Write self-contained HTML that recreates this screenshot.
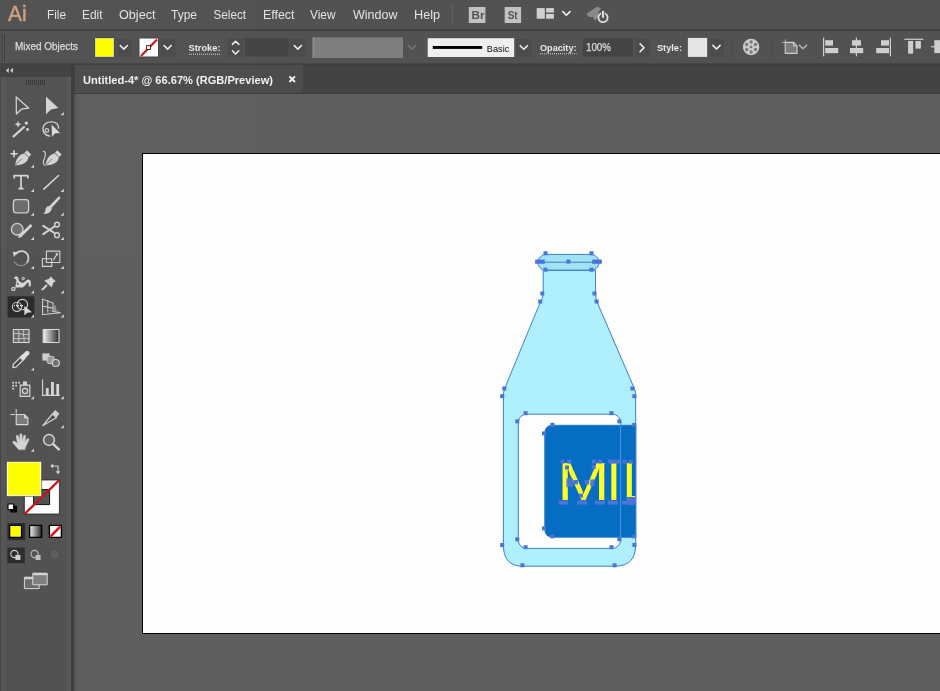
<!DOCTYPE html>
<html><head><meta charset="utf-8">
<style>
*{margin:0;padding:0;box-sizing:border-box}
html,body{width:940px;height:691px;overflow:hidden;background:#606060;font-family:"Liberation Sans",sans-serif;}
svg{position:absolute;left:0;top:0;will-change:transform;opacity:0.999}
text{font-family:"Liberation Sans",sans-serif}
.m{font-size:12.5px;fill:#e4e4e4}
.c{font-size:10px;fill:#dcdcdc;stroke:#dcdcdc;stroke-width:0.25px}
.cb{font-size:9.2px;fill:#ececec;font-weight:bold}
</style></head><body>
<svg width="940" height="691" viewBox="0 0 940 691">
<defs>
<path id="chev" d="M-3.6,-1.8 L0,1.8 L3.6,-1.8" fill="none" stroke="#f0f0f0" stroke-width="1.6" stroke-linecap="round" stroke-linejoin="round"/>
<path id="fly" d="M3,0 L3,3.2 L-0.2,3.2 Z" fill="#d4d4d4"/>
<linearGradient id="gr" x1="0" x2="1" y1="0" y2="0"><stop offset="0" stop-color="#f4f4f4"/><stop offset="1" stop-color="#2a2a2a"/></linearGradient>
</defs>
<!-- backgrounds -->
<rect x="0" y="0" width="940" height="691" fill="#606060"/>
<rect x="0" y="0" width="940" height="30" fill="#535353"/>
<rect x="0" y="29.4" width="940" height="1.6" fill="#3d3d3d"/>
<rect x="0" y="31" width="940" height="32.5" fill="#535353"/>
<rect x="0" y="63.5" width="940" height="30.5" fill="#444444"/>
<rect x="0" y="63.5" width="940" height="1.2" fill="#3e3e3e"/>
<rect x="0" y="93" width="940" height="1" fill="#3c3c3c"/>
<rect x="75" y="65" width="226.5" height="28" fill="#4d4d4d"/>
<rect x="301.5" y="65" width="1" height="28" fill="#525252"/>
<rect x="71" y="64" width="3.5" height="627" fill="#3e3e3e"/>
<rect x="74.5" y="94" width="4" height="597" fill="#5b5b5b"/>
<rect x="0" y="64" width="71" height="13" fill="#434343"/>
<rect x="0" y="77" width="71" height="614" fill="#535353"/>
<rect x="0" y="64" width="1" height="627" fill="#474747"/>
<rect x="1" y="77" width="5" height="614" fill="#575757"/>
<rect x="66.5" y="77" width="4.5" height="614" fill="#595959"/>
<!-- artboard -->
<rect x="142.5" y="153.5" width="800" height="480" fill="#ffffff" stroke="#000" stroke-width="1"/>
<g id="menu">
<text x="8" y="20.9" font-size="22.8" fill="#cfa284" stroke="#cfa284" stroke-width="0.5" textLength="18.6" lengthAdjust="spacingAndGlyphs">Ai</text>
<text class="m" x="47" y="19" textLength="19" lengthAdjust="spacingAndGlyphs">File</text>
<text class="m" x="82" y="19" textLength="20.5" lengthAdjust="spacingAndGlyphs">Edit</text>
<text class="m" x="119" y="19" textLength="36.5" lengthAdjust="spacingAndGlyphs">Object</text>
<text class="m" x="171" y="19" textLength="26" lengthAdjust="spacingAndGlyphs">Type</text>
<text class="m" x="213.5" y="19" textLength="32.5" lengthAdjust="spacingAndGlyphs">Select</text>
<text class="m" x="263" y="19" textLength="31.5" lengthAdjust="spacingAndGlyphs">Effect</text>
<text class="m" x="310" y="19" textLength="25.5" lengthAdjust="spacingAndGlyphs">View</text>
<text class="m" x="353" y="19" textLength="44.5" lengthAdjust="spacingAndGlyphs">Window</text>
<text class="m" x="414" y="19" textLength="26" lengthAdjust="spacingAndGlyphs">Help</text>
<rect x="452" y="4" width="1" height="21" fill="#626262"/>
<rect x="468.8" y="7" width="16.6" height="16" fill="#c2c2c2"/>
<text x="471.5" y="18.8" font-size="10.5" font-weight="bold" fill="#555" textLength="13" lengthAdjust="spacingAndGlyphs">Br</text>
<rect x="504.7" y="7" width="16.4" height="16" fill="#c2c2c2"/>
<text x="507.7" y="18.8" font-size="10.5" font-weight="bold" fill="#555" textLength="10" lengthAdjust="spacingAndGlyphs">St</text>
<rect x="536.7" y="8.1" width="8.1" height="10.6" fill="#d2d2d2"/>
<rect x="546.1" y="8.1" width="7.8" height="4.4" fill="#d2d2d2"/>
<rect x="546.1" y="13.9" width="7.8" height="4.8" fill="#d2d2d2"/>
<use href="#chev" x="566.4" y="13.4"/>
<!-- rocket / gpu icon -->
<path d="M586.5,14 L597,6.5 L601,8.5 L598,13 L601,14 L595,21 L593,17 L589,17 Z" fill="#8a8a8a"/>
<circle cx="603" cy="17.6" r="4.6" fill="none" stroke="#dedede" stroke-width="1.8"/>
<rect x="601.6" y="10.5" width="2.8" height="7.6" fill="#dedede" stroke="#535353" stroke-width="0.8"/>
</g>

<g id="ctrl">
<!-- gripper -->
<g fill="#3e3e3e"><rect x="2" y="34" width="1" height="28"/><rect x="4" y="34" width="1" height="28"/></g>
<g fill="#6a6a6a"><rect x="3" y="34" width="1" height="28" opacity="0.5"/></g>
<text class="c" x="15" y="50" textLength="63" lengthAdjust="spacingAndGlyphs" fill="#d6d6d6">Mixed Objects</text>
<!-- fill swatch -->
<rect x="94.5" y="37.5" width="20" height="20" fill="#454545"/>
<rect x="95.5" y="38.5" width="18" height="18" fill="#ffff00" stroke="#e8e89a" stroke-width="0.8"/>
<rect x="117.5" y="39" width="14.5" height="17.5" fill="#4c4c4c"/>
<use href="#chev" x="123.8" y="47.3"/>
<!-- stroke swatch -->
<rect x="138.5" y="37.5" width="20.5" height="20" fill="#454545"/>
<rect x="139.5" y="38.5" width="18.5" height="18" fill="#ffffff"/>
<path d="M141,56 L157,39.5" stroke="#d01818" stroke-width="2.2"/>
<rect x="146.6" y="45.6" width="3.8" height="3.8" fill="#fff" stroke="#500" stroke-width="0.9"/>
<rect x="160.5" y="39" width="15" height="17.5" fill="#4c4c4c"/>
<use href="#chev" x="167.6" y="47.3"/>
<!-- Stroke label -->
<text class="cb" x="188.5" y="51.3" textLength="32" lengthAdjust="spacingAndGlyphs">Stroke:</text>
<path d="M189,54.2 H220.5" stroke="#d8d8d8" stroke-width="1" stroke-dasharray="1,1"/>
<!-- spinner -->
<rect x="227.5" y="38.5" width="15.5" height="18" fill="#4c4c4c"/>
<path d="M232.4,44.4 L235.6,41.2 L238.8,44.4 M232.4,50.8 L235.6,54 L238.8,50.8" fill="none" stroke="#f0f0f0" stroke-width="1.5" stroke-linecap="round" stroke-linejoin="round"/>
<rect x="244.8" y="38.3" width="43.7" height="18.2" fill="#454545"/>
<rect x="289.5" y="38.5" width="15" height="18" fill="#4c4c4c"/>
<use href="#chev" x="297.8" y="47.3"/>
<!-- grey profile field -->
<rect x="312.6" y="37.4" width="90.4" height="20.6" fill="#808080"/>
<rect x="312.6" y="37.4" width="2" height="20.6" fill="#8c8c8c"/>
<use href="#chev" x="411.8" y="47.3" opacity="0.22"/>
<!-- brush def -->
<rect x="427.7" y="38.2" width="86.5" height="18.8" fill="#f0f0f0"/>
<rect x="432.8" y="46" width="49.4" height="2.9" fill="#000"/>
<text x="486.8" y="51.5" font-size="9.4" fill="#111" textLength="22.5" lengthAdjust="spacingAndGlyphs">Basic</text>
<rect x="516.6" y="39" width="15.2" height="17.5" fill="#4c4c4c"/>
<use href="#chev" x="523.8" y="47.5"/>
<!-- Opacity -->
<text class="cb" x="540" y="51" textLength="36.5" lengthAdjust="spacingAndGlyphs">Opacity:</text>
<path d="M540,53.8 H576.5" stroke="#d8d8d8" stroke-width="1" stroke-dasharray="1,1"/>
<rect x="583" y="38.3" width="50" height="18.2" fill="#454545"/>
<text class="c" x="586" y="51" fill="#ececec" textLength="25" lengthAdjust="spacingAndGlyphs">100%</text>
<rect x="635.5" y="38.5" width="14.2" height="18" fill="#4c4c4c"/>
<path d="M640,43.8 L644,47.8 L640,51.8" fill="none" stroke="#f0f0f0" stroke-width="1.6" stroke-linecap="round" stroke-linejoin="round"/>
<!-- Style -->
<text class="cb" x="657" y="51" fill="#cfcfcf" textLength="25" lengthAdjust="spacingAndGlyphs">Style:</text>
<rect x="687.9" y="37.9" width="19.2" height="19" fill="#e6e6e6"/>
<rect x="709.6" y="39" width="14.3" height="17.5" fill="#4c4c4c"/>
<use href="#chev" x="716.5" y="47.2"/>
<rect x="732.5" y="36" width="1" height="23" fill="#4f4f4f"/>
<!-- recolor globe -->
<circle cx="751.1" cy="47" r="8.2" fill="#cdcdcd"/>
<g fill="#7a7a7a">
<circle cx="751.1" cy="47" r="1.4"/>
<circle cx="751.1" cy="42" r="1.7"/><circle cx="755.5" cy="44.5" r="1.7"/><circle cx="755.5" cy="49.5" r="1.7"/>
<circle cx="751.1" cy="52" r="1.7"/><circle cx="746.7" cy="49.5" r="1.7"/><circle cx="746.7" cy="44.5" r="1.7"/>
</g>
<rect x="771" y="36" width="1" height="23" fill="#4f4f4f"/>
<!-- doc setup icon -->
<path d="M785.2,42.4 H793.5 L797,46 V53.4 H785.2 Z" fill="#7c7c7c" stroke="#d0d0d0" stroke-width="1.1"/>
<path d="M793.5,42.4 V46 H797" fill="none" stroke="#d0d0d0" stroke-width="0.9"/>
<path d="M782,42.4 H785 M785.2,39.5 V42" stroke="#bdbdbd" stroke-width="0.9"/>
<use href="#chev" x="803" y="47" opacity="0.6"/>
<!-- align icons -->
<g fill="#cfcfcf">
<rect x="823" y="37.7" width="1.2" height="18.6"/>
<rect x="825.2" y="40.2" width="7.8" height="5.4"/><rect x="825.2" y="48" width="13" height="5.2"/>
<rect x="855.8" y="37.7" width="1.2" height="18.6"/>
<rect x="852" y="40.2" width="9" height="5.4"/><rect x="850" y="48" width="13.2" height="5.2"/>
<rect x="889.8" y="37.7" width="1.2" height="18.6"/>
<rect x="881" y="40.2" width="8" height="5.4"/><rect x="876.2" y="48" width="12.8" height="5.2"/>
<rect x="904.3" y="38.7" width="19" height="1.2"/>
<rect x="908.1" y="41" width="5" height="12.7"/><rect x="915.5" y="41" width="5.4" height="7.6"/>
<rect x="931" y="46.2" width="9" height="1.2"/>
<rect x="934.3" y="40.2" width="5.7" height="12.9"/>
</g>
<!-- tab -->
<text x="83" y="83.6" font-size="10.5" font-weight="bold" fill="#f2f2f2" textLength="190" lengthAdjust="spacingAndGlyphs">Untitled-4* @ 66.67% (RGB/Preview)</text>
<path d="M289.4,76.4 L295,82 M295,76.4 L289.4,82" stroke="#f4f4f4" stroke-width="1.9"/>
<!-- tools header -->
<path d="M6,70.4 L8.7,67.8 V73 Z M10.2,70.4 L12.9,67.8 V73 Z" fill="#d8d8d8"/>
<g fill="#3a3a3a">
<rect x="26" y="80" width="1" height="5"/><rect x="28" y="80" width="1" height="5"/><rect x="30" y="80" width="1" height="5"/><rect x="32" y="80" width="1" height="5"/><rect x="34" y="80" width="1" height="5"/><rect x="36" y="80" width="1" height="5"/><rect x="38" y="80" width="1" height="5"/><rect x="40" y="80" width="1" height="5"/><rect x="42" y="80" width="1" height="5"/><rect x="44" y="80" width="1" height="5"/>
</g>
</g>

<g id="tools" stroke-linejoin="round" stroke-linecap="round">
<!-- selection (outline arrow) -->
<path d="M16.2,97 L28.6,108 L21.4,109.2 L16.4,114 Z" fill="none" stroke="#d4d4d4" stroke-width="1.3"/>
<!-- direct selection (filled) -->
<path d="M46,96.4 L58.4,108 L51,109.4 L46,114.2 Z" fill="#d4d4d4"/>
<use href="#fly" x="60.8" y="112"/>
<!-- magic wand -->
<path d="M13.6,136.4 L24,127" stroke="#d4d4d4" stroke-width="2.2" fill="none"/>
<path d="M18,120.8 L19,123.3 L21.5,124.3 L19,125.3 L18,127.8 L17,125.3 L14.5,124.3 L17,123.3 Z" fill="#d4d4d4"/>
<circle cx="26.3" cy="123.1" r="1.7" fill="#d4d4d4"/><circle cx="27.5" cy="129.5" r="1.4" fill="#d4d4d4"/>
<!-- lasso -->
<path d="M49.6,136 C45,135.6 42.4,131.6 43,128 C43.8,123.6 48,121.9 51.6,121.9 C55.6,121.9 58.8,124 58.6,128.2" fill="none" stroke="#d4d4d4" stroke-width="1.4"/>
<circle cx="46.9" cy="130.4" r="1.7" fill="none" stroke="#d4d4d4" stroke-width="1.2"/>
<path d="M51.3,123.9 L60.7,133.3 L55,133.8 L51.8,137.6 Z" fill="#dadada" stroke="#3c3c3c" stroke-width="0.5"/>
<!-- pen + -->
<path d="M11,153.8 H17 M14,150.8 V156.8" stroke="#dcdcdc" stroke-width="1.6" fill="none"/>
<path d="M15.2,165.4 C15.4,161 17.4,157 20.8,154.8 L24.3,153.2 L28.6,157.6 L27.2,160.8 C25,164 20,165.2 15.2,165.4 Z" fill="#d4d4d4"/>
<path d="M24.5,152.8 L27,150.3 L31.2,154.5 L28.9,157 Z" fill="#d4d4d4"/>
<path d="M15.6,164.8 L21.5,159" stroke="#6a6a6a" stroke-width="0.8"/>
<use href="#fly" x="31" y="164.6"/>
<!-- curvature -->
<path d="M43.2,151.3 C46.5,151.5 45.5,156 44,159.5 C42.8,162.5 43.5,164.5 45,165.5" fill="none" stroke="#d4d4d4" stroke-width="1.1"/>
<path d="M45.6,165.4 C45.8,161 47.8,157 51.2,154.8 L54.7,153.2 L59,157.6 L57.6,160.8 C55.4,164 50.4,165.2 45.6,165.4 Z" fill="#d4d4d4"/>
<path d="M54.9,152.8 L57.4,150.3 L61.6,154.5 L59.3,157 Z" fill="#d4d4d4"/>
<path d="M46,164.8 L51.9,159" stroke="#6a6a6a" stroke-width="0.8"/>
<!-- type -->
<path d="M14.2,178.5 V175.6 H27.8 V178.5 M21,175.6 V188.6 M18.4,188.7 H23.6" fill="none" stroke="#d8d8d8" stroke-width="1.7" stroke-linecap="butt"/>
<use href="#fly" x="31" y="188.8"/>
<!-- line -->
<path d="M43.8,189.2 L58.6,175.5" stroke="#d4d4d4" stroke-width="1.6" fill="none"/>
<use href="#fly" x="60.8" y="188.8"/>
<!-- rounded rect -->
<rect x="13.4" y="199.6" width="15.2" height="13.2" rx="2.8" fill="#6e6e6e" stroke="#d0d0d0" stroke-width="1.3"/>
<use href="#fly" x="31" y="212.6"/>
<!-- paintbrush -->
<path d="M59,197.8 L50,207.5" stroke="#d4d4d4" stroke-width="2.6" fill="none"/>
<path d="M50.3,206 C48,205.5 45.5,207 45.5,209.5 C45.5,211.5 44.5,213 43,213.6 C47,214.5 51.5,212.5 51.8,208 Z" fill="#d4d4d4"/>
<use href="#fly" x="60.8" y="212.6"/>
<!-- shaper -->
<circle cx="17.2" cy="229.2" r="5.8" fill="#707070" stroke="#cfcfcf" stroke-width="1.3"/>
<path d="M31.5,225 L21,235.2" stroke="#d4d4d4" stroke-width="2.8" fill="none" stroke-linecap="butt"/>
<path d="M19.4,233.8 L22.6,236.8 L18,238 Z" fill="#d4d4d4"/>
<use href="#fly" x="31" y="236.8"/>
<!-- scissors -->
<path d="M43.2,225.8 L54.5,233 M43.2,234.2 L54.5,226.5" stroke="#d4d4d4" stroke-width="2" fill="none"/>
<circle cx="57" cy="224.6" r="2.4" fill="none" stroke="#d4d4d4" stroke-width="1.4"/>
<circle cx="57" cy="235.2" r="2.4" fill="none" stroke="#d4d4d4" stroke-width="1.4"/>
<use href="#fly" x="60.8" y="236.8"/>
<!-- rotate -->
<path d="M15.5,254.2 C18.5,250 25,250 27.5,254.5 C29,257.5 28.5,260.5 27,262.5" fill="none" stroke="#d4d4d4" stroke-width="1.7"/>
<path d="M27,262.5 C24,267 17,266.5 14.5,262 " fill="none" stroke="#a8a8a8" stroke-width="1.2" stroke-dasharray="1.2,1.6"/>
<path d="M12.8,251.6 L17.6,252.4 L13.8,257 Z" fill="#d4d4d4"/>
<use href="#fly" x="31" y="265.8"/>
<!-- scale -->
<rect x="46.4" y="251.1" width="13.4" height="11.4" fill="none" stroke="#d4d4d4" stroke-width="1.1"/>
<rect x="42.4" y="258.7" width="9.4" height="7.7" fill="none" stroke="#d4d4d4" stroke-width="1.1"/>
<path d="M53.6,259.8 L57,254.2" stroke="#d4d4d4" stroke-width="1.2"/>
<path d="M55,253.6 L57.8,252.8 L57.8,255.8 Z" fill="#d4d4d4"/>
<use href="#fly" x="60.8" y="265.8"/>
<!-- warp -->
<path d="M14.2,279 C13.8,276.4 16.4,275.4 17.7,277 C18.9,278.6 18.5,280.4 19.3,281.3 C20.5,282.7 22.4,283.2 24.2,282.2 C25.8,281.3 26.6,279.3 28.6,279.5 C30.5,279.7 31.1,282 30.9,284 L30.7,286.5 L28.7,286.3 L28.7,283.5 C28.7,282.3 27.8,282.1 27,283.1 C25.8,284.7 24.6,286.7 22.6,287.4 L15.3,287.4 C15.1,285.6 16.2,283.8 16.4,281.8 C16.6,279.8 15.9,278.4 14.2,279 Z" fill="#d6d6d6"/>
<circle cx="17.9" cy="283.8" r="1.5" fill="#5a5a5a" stroke="#e4e4e4" stroke-width="0.8"/>
<circle cx="23.1" cy="278.5" r="1.3" fill="#535353" stroke="#e0e0e0" stroke-width="0.9"/>
<rect x="12.3" y="287.7" width="2.6" height="2.6" fill="#535353" stroke="#e6e6e6" stroke-width="1"/>
<use href="#fly" x="31" y="290.2"/>
<!-- puppet pin -->
<path d="M46.5,285.6 L42.4,289.4" stroke="#d4d4d4" stroke-width="2" fill="none"/>
<path d="M50.5,276.2 L55.8,281.4 L53.6,282.2 L51.6,287.6 L44.4,280.6 L49.6,278.6 Z" fill="#d4d4d4"/>
<use href="#fly" x="60.8" y="290.2"/>
<!-- shape builder (active) -->
<rect x="7.6" y="296.2" width="26.8" height="21.2" rx="1.5" fill="#2c2c2c" stroke="none"/>
<circle cx="17" cy="306.8" r="4.6" fill="none" stroke="#cfcfcf" stroke-width="1.1"/>
<circle cx="22.4" cy="304.6" r="5.2" fill="none" stroke="#cfcfcf" stroke-width="1.1"/>
<path d="M14,305.6 H23.5" stroke="#f0f0f0" stroke-width="1.3" stroke-dasharray="1,1" stroke-linecap="butt"/>
<path d="M24.3,306 L32,312.2 L27.2,312.8 L24.4,315.4 Z" fill="#d8d8d8"/>
<use href="#fly" x="31" y="314.2"/>
<!-- perspective grid -->
<path d="M42.6,299.2 V314.6 M42.6,299.2 L53,303 M42.6,306.2 L53,308 M42.6,314.6 L60,312.8 M47.8,300.8 V312.2 M53,303 V311.6 M53,311.4 L60,312.6 M55,306 V311" fill="none" stroke="#d4d4d4" stroke-width="1"/>
<path d="M50,310.8 H58 M50,308.5 H56" stroke="#9a9a9a" stroke-width="0.8"/>
<use href="#fly" x="60.8" y="314.2"/>
<!-- mesh -->
<rect x="13.4" y="329.5" width="15.6" height="13" fill="#6a6a6a" stroke="#dcdcdc" stroke-width="1.1"/>
<path d="M18,329.5 C20,334 18,338 19,342.5 M24,329.5 C22,334 25,338 24,342.5 M13.4,334 C18,332 24,336 29,334 M13.4,338.4 C18,340 24,337 29,338.6" fill="none" stroke="#cfcfcf" stroke-width="0.9"/>
<!-- gradient -->
<rect x="43.2" y="329.5" width="15.8" height="13" fill="url(#gr)" stroke="#dcdcdc" stroke-width="1.1"/>
<!-- eyedropper -->
<path d="M13.3,364.4 L22.2,355.5 L24.9,358.2 L16,367.1 L12.9,367.5 Z" fill="#474747" stroke="#dadada" stroke-width="1.3"/>
<path d="M22.6,357.6 L27.2,353.1" stroke="#dedede" stroke-width="4.6" fill="none"/>
<use href="#fly" x="31" y="367.4"/>
<!-- blend -->
<rect x="42.4" y="353.4" width="7.2" height="7.2" fill="#d0d0d0"/>
<rect x="47.2" y="356.4" width="7" height="7.2" rx="1.8" fill="#9a9a9a" stroke="#d0d0d0" stroke-width="0.9"/>
<circle cx="55.8" cy="363" r="3.5" fill="#707070" stroke="#d4d4d4" stroke-width="1.2"/>
<!-- symbol sprayer -->
<g fill="#d0d0d0"><rect x="12.2" y="381.8" width="1.8" height="1.8"/><rect x="15.2" y="381.8" width="1.8" height="1.8"/><rect x="18.2" y="381.8" width="1.8" height="1.8"/><rect x="12.2" y="384.8" width="1.8" height="1.8"/><rect x="15.2" y="384.8" width="1.8" height="1.8"/><rect x="12.2" y="387.8" width="1.8" height="1.8"/></g>
<rect x="23" y="381.4" width="4" height="3.6" fill="#d0d0d0"/>
<rect x="20.2" y="385.2" width="9.6" height="11.2" fill="#606060" stroke="#d4d4d4" stroke-width="1.2"/>
<circle cx="25" cy="391" r="2.6" fill="none" stroke="#d4d4d4" stroke-width="1.2"/>
<use href="#fly" x="31" y="396"/>
<!-- column graph -->
<path d="M42.6,379.4 V395.4 H60" fill="none" stroke="#d4d4d4" stroke-width="1.1" stroke-linecap="butt"/>
<rect x="45.9" y="388" width="2.8" height="7" fill="#d4d4d4"/><rect x="51" y="382" width="2.9" height="13" fill="#d4d4d4"/><rect x="56.3" y="384" width="2.8" height="11" fill="#d4d4d4"/>
<use href="#fly" x="60.8" y="396"/>
<!-- artboard tool -->
<path d="M16.2,414.5 H24.4 L27.9,418 V424.6 H16.2 Z" fill="#7c7c7c" stroke="#dcdcdc" stroke-width="1.1"/>
<path d="M24.4,414.5 V418 H27.9" fill="#cfcfcf" stroke="#dcdcdc" stroke-width="0.8"/>
<path d="M10.6,414.5 H15 M16.2,409.2 V413.4" stroke="#d8d8d8" stroke-width="1.1" stroke-linecap="butt"/>
<!-- slice -->
<path d="M42.6,425.8 L52.4,414 L56.6,417.6 Z" fill="none" stroke="#d4d4d4" stroke-width="1.2"/>
<path d="M52,413.6 L55.2,410 L59.4,413.8 L56.4,417.4 Z" fill="#d0d0d0"/>
<use href="#fly" x="60.8" y="425"/>
<!-- hand -->
<path d="M18.6,449.4 L13,443 C12.2,441.6 13.6,440.6 14.8,441.4 L17.6,443.6 L16.2,436.6 C16,435 17.8,434.6 18.3,436 L19.8,441 L19.8,435 C19.8,433.4 21.9,433.4 22,435 L22.2,441 L23.6,436 C24,434.6 25.9,435 25.7,436.6 L24.8,442 L27,439 C27.8,437.8 29.4,438.8 28.8,440.2 L26,446 C25.4,447.6 25,448.6 24.8,449.4 Z" fill="#d4d4d4" stroke="#d4d4d4" stroke-width="0.5"/>
<use href="#fly" x="31" y="448.6"/>
<!-- zoom -->
<circle cx="49" cy="440" r="5.4" fill="#626262" stroke="#d4d4d4" stroke-width="1.5"/>
<path d="M53.2,444.2 L58.8,449.4" stroke="#d4d4d4" stroke-width="2.4"/>
<!-- fill / stroke swatches -->
<rect x="24.6" y="480" width="34.8" height="34" fill="#fff" stroke="#222" stroke-width="0.8"/>
<rect x="34" y="489.6" width="15.6" height="15" fill="#535353" stroke="#111" stroke-width="1"/>
<path d="M24.6,514 L59.4,480" stroke="#c8141c" stroke-width="2.4" stroke-linecap="butt"/>
<rect x="6.6" y="461.4" width="35" height="35" fill="#ffffff" stroke="#3a3a3a" stroke-width="0.6"/>
<rect x="7.8" y="462.6" width="32.6" height="32.6" fill="#ffff00"/>
<!-- swap arrows -->
<path d="M52.5,466 H58 V471.5" fill="none" stroke="#d0d0d0" stroke-width="1.2"/>
<path d="M50.2,466 L53.2,463.6 V468.4 Z M58,474.2 L55.6,471.2 H60.4 Z" fill="#d0d0d0"/>
<!-- default colours -->
<rect x="11" y="506.4" width="5.4" height="5.4" fill="#000" stroke="#000" stroke-width="1.2"/>
<rect x="8" y="504" width="5.6" height="5.6" fill="#fff" stroke="#000" stroke-width="1.1"/>
<!-- colour mode buttons -->
<rect x="7.4" y="523" width="17.8" height="17.2" fill="#2e2e2e"/>
<rect x="9.6" y="525.4" width="12" height="12" fill="#ffff00" stroke="#000" stroke-width="1.4"/>
<rect x="29.6" y="525.4" width="12" height="12" fill="url(#gr)" stroke="#000" stroke-width="1.4"/>
<rect x="49.4" y="525.4" width="12" height="12" fill="#fff" stroke="#000" stroke-width="1.4"/>
<path d="M50.6,536.4 L60.2,526.6" stroke="#e01020" stroke-width="2.6" stroke-linecap="butt"/>
<!-- draw modes -->
<rect x="7.4" y="547.6" width="17.4" height="15.6" fill="#2e2e2e"/>
<circle cx="14.4" cy="554" r="3.6" fill="none" stroke="#cfcfcf" stroke-width="1.1"/>
<rect x="15.4" y="555" width="5" height="5" fill="#cfcfcf"/>
<circle cx="34.6" cy="554" r="3.6" fill="none" stroke="#bdbdbd" stroke-width="1.1"/>
<rect x="35.6" y="555" width="5" height="5" fill="#bdbdbd"/>
<circle cx="54.6" cy="554.6" r="3.4" fill="#5e5e5e" stroke="#646464" stroke-width="1"/>
<!-- screen mode -->
<rect x="24.8" y="577.2" width="14.4" height="11.4" fill="#6e6e6e" stroke="#d8d8d8" stroke-width="1"/>
<rect x="24.8" y="577.2" width="14.4" height="2" fill="#d8d8d8"/>
<rect x="33.2" y="573.2" width="14" height="11.6" fill="#808080" stroke="#d8d8d8" stroke-width="1"/>
<rect x="33.2" y="573.2" width="14" height="2" fill="#d8d8d8"/>
</g>

<g id="art">
<defs>
<clipPath id="bodyclip"><rect x="500" y="400" width="135.9" height="170"/></clipPath>
<path id="body" d="M543.2,270.3 L543.2,293.5 Q543.2,298 540.4,302 L504.6,388.6 Q503.4,392 503.4,396.3 L503.4,545 Q503.4,566.2 522.4,566.2 L614.6,566.2 Q635.7,566.2 635.7,545 L635.7,396.3 Q635.7,392 634.4,388.6 L597,302 Q595.5,298 595.5,293.5 L595.5,270.3 Z"/>
<path id="cap" d="M546,254.4 H591 Q593.6,254.4 595.6,256 L597.8,258 Q599.2,259.6 599.2,262.2 Q599.2,264.6 598,266.2 L596.2,268.6 Q594.6,270.3 591.5,270.3 H545.5 Q542.4,270.3 540.8,268.6 L539,266.2 Q537.8,264.6 537.8,262.2 Q537.8,259.6 539.2,258 L541.4,256 Q543.4,254.4 546,254.4 Z"/>
<rect id="a" x="-2" y="-2" width="4" height="4" fill="#4a75dc"/>
</defs>
<!-- bottle body -->
<use href="#body" fill="#b1f1ff"/>
<!-- inner hole -->
<rect x="518.3" y="414.2" width="102.3" height="134.2" rx="8.2" fill="#ffffff"/>
<!-- blue label -->
<path d="M553,425.3 H635.8 V537.2 H553 Q544.8,537.2 544.8,529 V433.5 Q544.8,425.3 553,425.3 Z" fill="#066ec3"/>
<!-- MIL text -->
<g clip-path="url(#bodyclip)">
<g font-size="53" fill="#ffff2a"><text transform="translate(557.5,500) scale(1.175,1)">M</text><text x="606.4" y="500">I</text><text x="622.4" y="500">L</text></g>
</g>
<!-- cap -->
<use href="#cap" fill="#a4e3f6"/>
<!-- selection outlines -->
<g fill="none" stroke="#3b80cc" stroke-width="1">
<use href="#body"/>
<use href="#cap"/>
<path d="M535.5,262.2 H601.5"/>
<rect x="518.3" y="414.2" width="102.3" height="134.2" rx="8.2"/>
<path d="M553,425.3 H635.8 V537.2 H553 Q544.8,537.2 544.8,529 V433.5 Q544.8,425.3 553,425.3 Z" stroke="#2a78d0"/>
</g>
<path d="M620.6,422 V540" stroke="#4a96e6" stroke-width="1"/>
<!-- anchors -->
<g>
<use href="#a" x="545.5" y="253.3"/><use href="#a" x="591.5" y="253.3"/>
<use href="#a" x="545.5" y="269.7"/><use href="#a" x="591.5" y="269.7"/>
<rect x="535.2" y="259.6" width="9.6" height="4.2" fill="#4a75dc"/><rect x="592.2" y="259.6" width="9.6" height="4.2" fill="#4a75dc"/>
<use href="#a" x="568.4" y="261.6"/>
<use href="#a" x="542.3" y="293.5"/><use href="#a" x="540.2" y="301.5"/>
<use href="#a" x="594.5" y="293.5"/><use href="#a" x="596.6" y="301.5"/>
<use href="#a" x="504.3" y="388.5"/><use href="#a" x="502.2" y="396.2"/>
<use href="#a" x="632.4" y="388.5"/><use href="#a" x="634.4" y="396.2"/>
<use href="#a" x="502.2" y="545"/><use href="#a" x="634.4" y="545"/>
<use href="#a" x="522.4" y="565.3"/><use href="#a" x="614.6" y="565.3"/>
<!-- inner rect anchors -->
<use href="#a" x="525.6" y="413.2"/><use href="#a" x="611.5" y="413.2"/>
<use href="#a" x="517.3" y="421.4"/><use href="#a" x="619.4" y="421.4"/>
<use href="#a" x="517.3" y="539.3"/><use href="#a" x="619.4" y="539.3"/>
<use href="#a" x="525.6" y="547.2"/><use href="#a" x="611.5" y="547.2"/>
<!-- blue rect anchors -->
<use href="#a" x="552.4" y="424.8"/><use href="#a" x="544" y="433.4"/>
<use href="#a" x="544" y="528.4"/><use href="#a" x="552.4" y="536.4"/>
<use href="#a" x="634.2" y="425"/><use href="#a" x="634.2" y="536.4"/>
<!-- text anchors top -->
<rect x="560.5" y="459.6" width="4" height="4" fill="#4a75dc"/><rect x="567" y="459.6" width="4.4" height="4" fill="#4a75dc"/>
<rect x="592" y="459.6" width="4" height="4" fill="#4a75dc"/><rect x="598" y="459.6" width="4.4" height="4" fill="#4a75dc"/>
<rect x="608" y="459.6" width="12" height="4" fill="#4a75dc"/>
<rect x="622.5" y="459.6" width="4" height="4" fill="#4a75dc"/><rect x="628.5" y="459.6" width="4.4" height="4" fill="#4a75dc"/>
<!-- text anchors bottom -->
<rect x="558.5" y="500.6" width="9.5" height="4" fill="#4a75dc"/>
<rect x="577" y="500.6" width="10" height="4" fill="#4a75dc"/>
<rect x="595" y="500.6" width="10" height="4" fill="#4a75dc"/>
<rect x="608" y="500.6" width="10" height="4" fill="#4a75dc"/>
<rect x="622" y="500.6" width="5" height="4" fill="#4a75dc"/>
<path d="M627,497 H636 V504 L633,505 H627 Z" fill="#4a75dc"/>
<!-- mid-letter anchors on M -->
<use href="#a" x="567" y="467.5"/><use href="#a" x="593.6" y="467"/>
<rect x="566.4" y="478.4" width="6.6" height="8.8" fill="#4a75dc" opacity="0.92"/>
<rect x="573.3" y="480" width="4.6" height="4.4" fill="#4a75dc"/>
<rect x="584.6" y="480" width="4.6" height="4.4" fill="#4a75dc"/>
<rect x="590.2" y="479.4" width="4.4" height="7" fill="#4a75dc" opacity="0.9"/>
<use href="#a" x="581" y="495.6"/>
</g>
</g>

</svg>
</body></html>
